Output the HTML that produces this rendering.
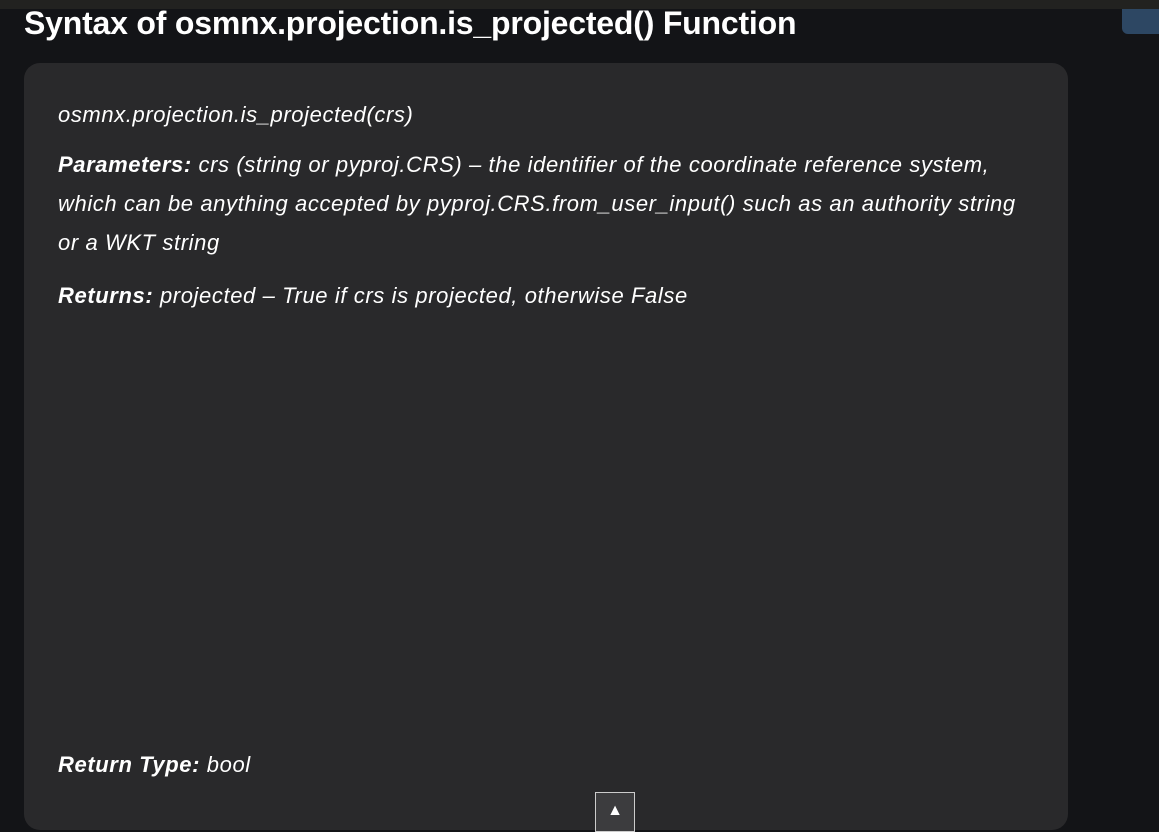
<!DOCTYPE html><html><head><style>
body{margin:0;width:1159px;height:830px;background:#131417;overflow:hidden;font-family:"Liberation Sans",sans-serif;color:#fff;position:relative}
.top{position:absolute;left:0;top:0;width:1159px;height:9px;background:#222220}
.blue{position:absolute;left:1122px;top:9px;width:40px;height:25px;background:#2d4763;border-radius:0 0 0 6px}
h1{position:absolute;left:24px;top:5px;margin:0;font-size:32px;font-weight:bold;letter-spacing:-0.2px;line-height:36px;white-space:nowrap}
.card{position:absolute;left:24px;top:63px;width:1044px;height:767px;background:#29292b;border-radius:16px}
p{position:absolute;left:34px;margin:0;font-style:italic;font-size:22px;line-height:39px;width:1010px;letter-spacing:0.6px;white-space:nowrap}
.btn{position:absolute;left:595px;top:792px;width:40px;height:40px;background:#3c3c3e;border:1px solid #ccc;box-sizing:border-box;text-align:center;font-size:16px;line-height:36px}
</style></head><body>
<div class="top"></div><div class="blue"></div>
<h1>Syntax of osmnx.projection.is_projected() Function</h1>
<div class="card">
<p style="top:32px">osmnx.projection.is_projected(crs)</p>
<p style="top:82px"><b>Parameters:</b> crs (string or pyproj.CRS) – the identifier of the coordinate reference system,<br>which can be anything accepted by pyproj.CRS.from_user_input() such as an authority string<br>or a WKT string</p>
<p style="top:213px"><b>Returns:</b> projected – True if crs is projected, otherwise False</p>
<p style="top:682px"><b>Return Type:</b> bool</p>
</div>
<div class="btn">▲</div>
</body></html>
